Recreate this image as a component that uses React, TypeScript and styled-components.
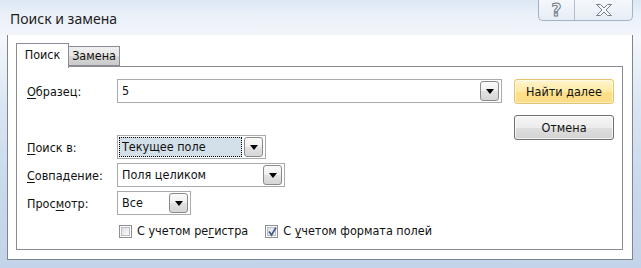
import React from "react";
import styled, { createGlobalStyle } from "styled-components";

const GlobalStyle = createGlobalStyle`
  html, body { margin: 0; padding: 0; background: #fff; }
  body { font-family: "DejaVu Sans Condensed", "DejaVu Sans", sans-serif; font-size: 12.5px; color: #111; }
  * { box-sizing: border-box; }
`;

const Window = styled.div`
  width: 641px;
  height: 268px;
  display: flex;
  flex-direction: column;
  background: linear-gradient(180deg, #dde8f5 0%, #eef3fa 10%, #f4f7fb 14%, #d9e5f2 40%, #c8d9ee 70%, #c3d4ea 100%);
  overflow: hidden;
`;

const TitleBar = styled.div`
  height: 35px;
  flex: none;
  display: flex;
  align-items: flex-start;
  justify-content: space-between;
  padding: 0 8px 0 10px;
  background: linear-gradient(180deg, #dce7f4 0%, #e9f0f8 40%, #f3f6fb 100%);
`;

const Title = styled.div`
  font-family: "Noto Sans", "Open Sans", sans-serif;
  font-size: 14px;
  line-height: 20px;
  margin-top: 9px;
  color: #1e1e1e;
`;

const CaptionGroup = styled.div`
  display: flex;
  height: 21px;
  border: 1px solid #a3b1c3;
  border-top: none;
  border-radius: 0 0 5px 5px;
  background: linear-gradient(180deg, #f4f7fb 0%, #e8eef6 100%);
  overflow: hidden;
`;

const CaptionButton = styled.div<{ $w: number; $divider?: boolean }>`
  width: ${(p) => p.$w}px;
  height: 100%;
  display: flex;
  align-items: center;
  justify-content: center;
  border-right: ${(p) => (p.$divider ? "1px solid #b4c0cf" : "none")};
`;

const HelpGlyph = styled.span`
  font-family: "DejaVu Sans", sans-serif;
  font-weight: bold;
  font-size: 17px;
  line-height: 16px;
  color: #f4f7fb;
  -webkit-text-stroke: 1px #6f7a86;
`;

const Client = styled.div`
  flex: 1;
  margin: 0 8px 8px 7px;
  background: #fff;
  border: 1px solid #7d8590;
  border-top: none;
  padding: 8px 9px 9px 8px;
  display: flex;
  flex-direction: column;
`;

const TabStrip = styled.div`
  height: 24px;
  flex: none;
  display: flex;
  align-items: flex-end;
  position: relative;
  z-index: 1;
  margin-bottom: -1px;
`;

const Tab = styled.div<{ $active?: boolean; $w: number }>`
  width: ${(p) => p.$w}px;
  height: ${(p) => (p.$active ? 25 : 20)}px;
  border: 1px solid #898c95;
  border-bottom: ${(p) => (p.$active ? "none" : "1px solid #898c95")};
  border-left: ${(p) => (p.$active ? "1px solid #898c95" : "none")};
  background: ${(p) => (p.$active ? "#fff" : "linear-gradient(180deg, #f0f0f0 0%, #e6e6e6 50%, #d8d8d8 51%, #cbcbcb 100%)")};
  display: flex;
  align-items: ${(p) => (p.$active ? "flex-start" : "center")};
  padding-top: ${(p) => (p.$active ? 3 : 0)}px;
  justify-content: center;
  margin-bottom: ${(p) => (p.$active ? -1 : 1)}px;
  line-height: 16px;
`;

const Panel = styled.div`
  flex: 1;
  border: 1px solid #898c95;
  background: #fff;
  padding: 12px 8px 0 10px;
  display: flex;
  align-items: flex-start;
  gap: 11px;
`;

const Form = styled.div`
  flex: 1;
  display: flex;
  flex-direction: column;
`;

const Row = styled.div<{ $mt?: number }>`
  display: grid;
  grid-template-columns: 90px 1fr;
  align-items: center;
  margin-top: ${(p) => p.$mt ?? 0}px;
`;

const Label = styled.div`
  line-height: 16px;
  padding-top: 1px;
`;

const Field = styled.div<{ $w?: number }>`
  width: ${(p) => (p.$w ? `${p.$w}px` : "100%")};
  height: 24px;
  border: 1px solid #a7abb0;
  background: #fff;
  display: flex;
  align-items: center;
  padding: 0 2px 0 1px;
  gap: 2px;
`;

const Value = styled.div<{ $focused?: boolean }>`
  flex: 1;
  height: 20px;
  line-height: 18px;
  padding-left: 2px;
  white-space: nowrap;
  overflow: hidden;
  border: 1px ${(p) => (p.$focused ? "dotted #000" : "solid transparent")};
  background: ${(p) => (p.$focused ? "#d3e0e9" : "transparent")};
`;

const DropButton = styled.div`
  width: 19px;
  height: 20px;
  flex: none;
  border: 1px solid #8a8a8a;
  border-radius: 3px;
  background: linear-gradient(180deg, #fbfbfb 0%, #efefef 50%, #e2e2e2 51%, #d6d6d6 100%);
  display: flex;
  align-items: center;
  justify-content: center;
`;

const ArrowDown = styled.div`
  width: 0;
  height: 0;
  border-left: 4px solid transparent;
  border-right: 4px solid transparent;
  border-top: 5px solid #000;
  margin-top: 1px;
`;

const CheckRow = styled.div`
  display: flex;
  align-items: center;
  gap: 17px;
  margin-top: 8px;
  padding-left: 92px;
`;

const CheckItem = styled.label`
  display: flex;
  align-items: center;
  gap: 5px;
  line-height: 16px;
`;

const Box = styled.span`
  width: 13px;
  height: 13px;
  flex: none;
  border: 1px solid #8e8f8f;
  background: #fff;
  padding: 1px;
  display: flex;
  position: relative;
`;

const BoxInner = styled.span`
  flex: 1;
  background: linear-gradient(135deg, #dcdfe3 0%, #eef0f2 60%, #fbfbfb 100%);
  border: 1px solid #b9bdc2;
`;

const Check = styled.svg`
  position: absolute;
  left: 1px;
  top: 0px;
`;

const ButtonCol = styled.div`
  width: 100px;
  display: flex;
  flex-direction: column;
  gap: 11px;
`;

const Button = styled.div<{ $primary?: boolean }>`
  height: 25px;
  border: 1px solid ${(p) => (p.$primary ? "#e6c46f" : "#707070")};
  border-radius: 3px;
  background: ${(p) =>
    p.$primary
      ? "linear-gradient(180deg, #fff5cf 0%, #ffeaa4 50%, #fde08a 51%, #fbdc86 100%)"
      : "linear-gradient(180deg, #f6f6f6 0%, #ececec 50%, #dfdfdf 51%, #d3d3d3 100%)"};
  box-shadow: inset 0 0 0 1px ${(p) => (p.$primary ? "rgba(255,255,255,0.5)" : "rgba(255,255,255,0.7)")};
  display: flex;
  align-items: center;
  justify-content: center;
  line-height: 16px;
`;

const U = styled.span`
  text-decoration: underline;
  text-underline-offset: 2px;
`;

const Select = ({ w, value, focused }: { w: number; value: string; focused?: boolean }) => (
  <Field $w={w}>
    <Value $focused={focused}>{value}</Value>
    <DropButton>
      <ArrowDown />
    </DropButton>
  </Field>
);

export default function App() {
  return (
    <>
      <GlobalStyle />
      <Window>
        <TitleBar>
          <Title>Поиск и замена</Title>
          <CaptionGroup>
            <CaptionButton $w={36} $divider>
              <HelpGlyph>?</HelpGlyph>
            </CaptionButton>
            <CaptionButton $w={57}>
              <svg width="18" height="12" viewBox="0 0 18 12">
                <path
                  d="M1.5 0.5 H5.5 L9 4 L12.5 0.5 H16.5 L11 6 L16.5 11.5 H12.5 L9 8 L5.5 11.5 H1.5 L7 6 Z"
                  fill="#f4f7fb"
                  stroke="#76808b"
                  strokeWidth="1"
                />
              </svg>
            </CaptionButton>
          </CaptionGroup>
        </TitleBar>
        <Client>
          <TabStrip>
            <Tab $active $w={53}>Поиск</Tab>
            <Tab $w={51}>Замена</Tab>
          </TabStrip>
          <Panel>
            <Form>
              <Row>
                <Label>
                  <U>О</U>бразец:
                </Label>
                <Select w={385} value="5" />
              </Row>
              <Row $mt={32}>
                <Label>
                  <U>П</U>оиск в:
                </Label>
                <Select w={149} value="Текущее поле" focused />
              </Row>
              <Row $mt={4}>
                <Label>
                  <U>С</U>овпадение:
                </Label>
                <Select w={168} value="Поля целиком" />
              </Row>
              <Row $mt={4}>
                <Label>
                  Прос<U>м</U>отр:
                </Label>
                <Select w={74} value="Все" />
              </Row>
              <CheckRow>
                <CheckItem>
                  <Box>
                    <BoxInner />
                  </Box>
                  <span>
                    С учетом ре<U>г</U>истра
                  </span>
                </CheckItem>
                <CheckItem>
                  <Box>
                    <BoxInner />
                    <Check width="11" height="11" viewBox="0 0 11 11">
                      <path d="M2 5.5 L4.5 9 L9 1.5" fill="none" stroke="#4b5e8e" strokeWidth="1.8" />
                    </Check>
                  </Box>
                  <span>
                    С <U>у</U>четом формата полей
                  </span>
                </CheckItem>
              </CheckRow>
            </Form>
            <ButtonCol>
              <Button $primary>Найти далее</Button>
              <Button>Отмена</Button>
            </ButtonCol>
          </Panel>
        </Client>
      </Window>
    </>
  );
}
